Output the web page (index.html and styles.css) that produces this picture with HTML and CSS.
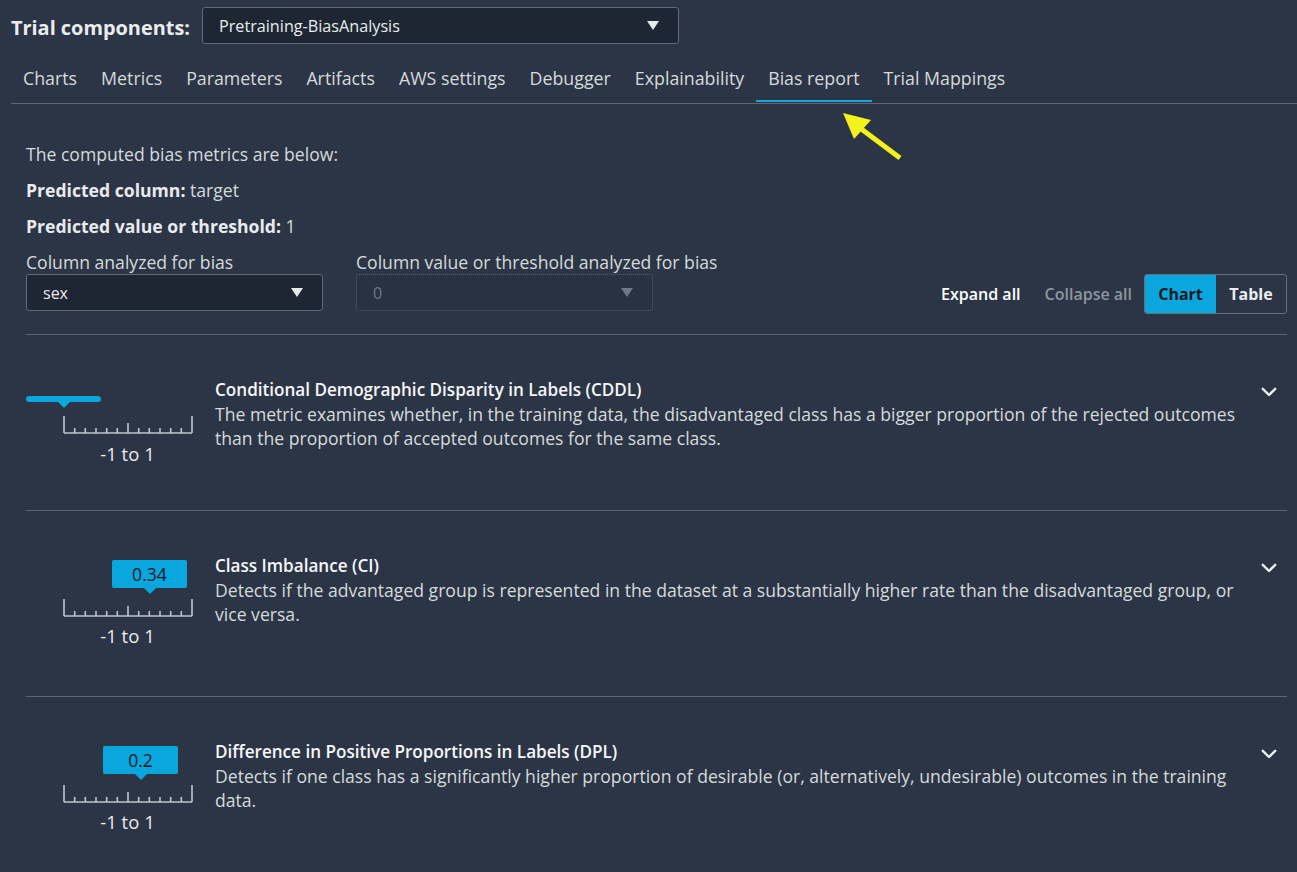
FILE: index.html
```html
<!DOCTYPE html>
<html lang="en">
<head>
<meta charset="utf-8">
<title>Bias report</title>
<link rel="stylesheet" href="styles.css">
</head>
<body>
<div class="app">
  <header class="topbar">
    <span class="topbar__label">Trial components:</span>
    <div class="select select--top">
      <span class="select__value">Pretraining-BiasAnalysis</span>
      <span class="caret"></span>
    </div>
  </header>

  <nav class="tabs">
    <span class="tab">Charts</span>
    <span class="tab">Metrics</span>
    <span class="tab">Parameters</span>
    <span class="tab">Artifacts</span>
    <span class="tab">AWS settings</span>
    <span class="tab">Debugger</span>
    <span class="tab">Explainability</span>
    <span class="tab tab--active">Bias report</span>
    <span class="tab">Trial Mappings</span>
  </nav>

  <main class="report">
    <p class="intro">The computed bias metrics are below:</p>
    <p class="intro"><b>Predicted column:</b> target</p>
    <p class="intro"><b>Predicted value or threshold:</b> 1</p>

    <div class="filters">
      <div class="field">
        <label class="field__label">Column analyzed for bias</label>
        <div class="select select--field">
          <span class="select__value">sex</span>
          <span class="caret"></span>
        </div>
      </div>
      <div class="field field--second">
        <label class="field__label">Column value or threshold analyzed for bias</label>
        <div class="select select--field select--disabled">
          <span class="select__value">0</span>
          <span class="caret caret--disabled"></span>
        </div>
      </div>
      <div class="actions">
        <span class="action action--primary">Expand all</span>
        <span class="action action--muted">Collapse all</span>
        <div class="segmented">
          <span class="segmented__btn segmented__btn--active">Chart</span>
          <span class="segmented__btn">Table</span>
        </div>
      </div>
    </div>

    <section class="metric metric--empty">
      <div class="gauge">
        <div class="gauge__indicator">
          <div class="badge badge--empty" style="margin-left:0px"></div>
        </div>
        <svg class="scale" width="130" height="18" viewBox="0 0 130 18">
          <g stroke="#bfc5cc" stroke-width="1.6" fill="none">
            <line x1="1" y1="17" x2="129" y2="17"/>
            <line x1="1" y1="0" x2="1" y2="17"/>
            <line x1="11.7" y1="12" x2="11.7" y2="17"/>
            <line x1="22.3" y1="12" x2="22.3" y2="17"/>
            <line x1="33" y1="12" x2="33" y2="17"/>
            <line x1="43.7" y1="12" x2="43.7" y2="17"/>
            <line x1="54.3" y1="12" x2="54.3" y2="17"/>
            <line x1="65" y1="7" x2="65" y2="17"/>
            <line x1="75.7" y1="12" x2="75.7" y2="17"/>
            <line x1="86.3" y1="12" x2="86.3" y2="17"/>
            <line x1="97" y1="12" x2="97" y2="17"/>
            <line x1="107.7" y1="12" x2="107.7" y2="17"/>
            <line x1="118.3" y1="12" x2="118.3" y2="17"/>
            <line x1="129" y1="0" x2="129" y2="17"/>
          </g>
        </svg>
        <div class="gauge__range">-1 to 1</div>
      </div>
      <div class="metric__text">
        <div class="metric__title">Conditional Demographic Disparity in Labels (CDDL)</div>
        <div class="metric__desc">The metric examines whether, in the training data, the disadvantaged class has a bigger proportion of the rejected outcomes than the proportion of accepted outcomes for the same class.</div>
      </div>
      <svg class="chevron" width="16" height="10" viewBox="0 0 16 10"><path d="M1.8 1.8 L8 8 L14.2 1.8" fill="none" stroke="#eef0f2" stroke-width="2.4" stroke-linecap="round" stroke-linejoin="round"/></svg>
    </section>

    <section class="metric">
      <div class="gauge">
        <div class="gauge__indicator">
          <div class="badge" style="margin-left:86px">0.34</div>
        </div>
        <svg class="scale" width="130" height="18" viewBox="0 0 130 18">
          <g stroke="#bfc5cc" stroke-width="1.6" fill="none">
            <line x1="1" y1="17" x2="129" y2="17"/>
            <line x1="1" y1="0" x2="1" y2="17"/>
            <line x1="11.7" y1="12" x2="11.7" y2="17"/>
            <line x1="22.3" y1="12" x2="22.3" y2="17"/>
            <line x1="33" y1="12" x2="33" y2="17"/>
            <line x1="43.7" y1="12" x2="43.7" y2="17"/>
            <line x1="54.3" y1="12" x2="54.3" y2="17"/>
            <line x1="65" y1="7" x2="65" y2="17"/>
            <line x1="75.7" y1="12" x2="75.7" y2="17"/>
            <line x1="86.3" y1="12" x2="86.3" y2="17"/>
            <line x1="97" y1="12" x2="97" y2="17"/>
            <line x1="107.7" y1="12" x2="107.7" y2="17"/>
            <line x1="118.3" y1="12" x2="118.3" y2="17"/>
            <line x1="129" y1="0" x2="129" y2="17"/>
          </g>
        </svg>
        <div class="gauge__range">-1 to 1</div>
      </div>
      <div class="metric__text">
        <div class="metric__title">Class Imbalance (CI)</div>
        <div class="metric__desc">Detects if the advantaged group is represented in the dataset at a substantially higher rate than the disadvantaged group, or vice versa.</div>
      </div>
      <svg class="chevron" width="16" height="10" viewBox="0 0 16 10"><path d="M1.8 1.8 L8 8 L14.2 1.8" fill="none" stroke="#eef0f2" stroke-width="2.4" stroke-linecap="round" stroke-linejoin="round"/></svg>
    </section>

    <section class="metric">
      <div class="gauge">
        <div class="gauge__indicator">
          <div class="badge" style="margin-left:77px">0.2</div>
        </div>
        <svg class="scale" width="130" height="18" viewBox="0 0 130 18">
          <g stroke="#bfc5cc" stroke-width="1.6" fill="none">
            <line x1="1" y1="17" x2="129" y2="17"/>
            <line x1="1" y1="0" x2="1" y2="17"/>
            <line x1="11.7" y1="12" x2="11.7" y2="17"/>
            <line x1="22.3" y1="12" x2="22.3" y2="17"/>
            <line x1="33" y1="12" x2="33" y2="17"/>
            <line x1="43.7" y1="12" x2="43.7" y2="17"/>
            <line x1="54.3" y1="12" x2="54.3" y2="17"/>
            <line x1="65" y1="7" x2="65" y2="17"/>
            <line x1="75.7" y1="12" x2="75.7" y2="17"/>
            <line x1="86.3" y1="12" x2="86.3" y2="17"/>
            <line x1="97" y1="12" x2="97" y2="17"/>
            <line x1="107.7" y1="12" x2="107.7" y2="17"/>
            <line x1="118.3" y1="12" x2="118.3" y2="17"/>
            <line x1="129" y1="0" x2="129" y2="17"/>
          </g>
        </svg>
        <div class="gauge__range">-1 to 1</div>
      </div>
      <div class="metric__text">
        <div class="metric__title">Difference in Positive Proportions in Labels (DPL)</div>
        <div class="metric__desc">Detects if one class has a significantly higher proportion of desirable (or, alternatively, undesirable) outcomes in the training data.</div>
      </div>
      <svg class="chevron" width="16" height="10" viewBox="0 0 16 10"><path d="M1.8 1.8 L8 8 L14.2 1.8" fill="none" stroke="#eef0f2" stroke-width="2.4" stroke-linecap="round" stroke-linejoin="round"/></svg>
    </section>
  </main>

  <svg class="callout-arrow" width="80" height="60" viewBox="830 105 80 60">
    <line x1="900" y1="158" x2="860" y2="128" stroke="#f4f21c" stroke-width="5" stroke-linecap="butt"/>
    <polygon points="843,113 871,120 854,139" fill="#f4f21c"/>
  </svg>
</div>
</body>
</html>
```

FILE: styles.css
```css
* { box-sizing: border-box; }

html, body {
  margin: 0;
  padding: 0;
}

body {
  background: #2c3546;
  font-family: "Open Sans", "Noto Sans", sans-serif;
  color: #d5dbdb;
  font-size: 17.6px;
}

.app {
  position: relative;
  width: 1297px;
  height: 872px;
  overflow: hidden;
}

/* Top bar */
.topbar {
  display: flex;
  align-items: center;
  gap: 12px;
  padding: 7px 0 0 11px;
}

.topbar__label {
  padding-top: 3px;
  font-size: 19.9px;
  font-weight: 700;
  color: #eaeded;
}

.select {
  display: flex;
  align-items: center;
  justify-content: space-between;
  height: 37px;
  background: #1e2633;
  border: 1px solid #5f6b7a;
  border-radius: 3px;
  padding: 0 19px 0 16px;
}

.select--top {
  width: 477px;
  font-size: 16.2px;
  color: #eaeded;
}

.caret {
  width: 0;
  height: 0;
  border-left: 6px solid transparent;
  border-right: 6px solid transparent;
  border-top: 9px solid #e6e9ec;
}

.caret--disabled {
  border-top-color: #6f7884;
}

/* Tabs */
.tabs {
  display: flex;
  margin: 10px 0 0 11px;
  height: 50px;
  border-bottom: 1px solid #5f6670;
}

.tab {
  position: relative;
  display: flex;
  align-items: center;
  padding: 0 12px 2px;
  font-size: 17.8px;
  color: #d5dbdb;
}

.tab--active::after {
  content: "";
  position: absolute;
  left: 0;
  right: 0;
  bottom: 1px;
  height: 2px;
  background: #1ba4d8;
}

/* Report */
.report {
  padding: 38px 10px 0 26px;
}

.intro {
  margin: 0 0 12px;
  line-height: 24px;
}

.intro b {
  font-weight: 700;
  color: #e9ebed;
}

.filters {
  display: flex;
  align-items: flex-start;
  padding-bottom: 20px;
  border-bottom: 1px solid #5f6670;
}

.field__label {
  display: block;
  line-height: 24px;
}

.select--field {
  width: 297px;
  font-size: 16px;
  color: #eaeded;
}

.field--second {
  margin-left: 33px;
}

.select--disabled {
  background: #283242;
  border: 1px dotted #59616c;
  color: #6f7884;
}

.actions {
  margin-left: auto;
  margin-top: 24px;
  display: flex;
  align-items: center;
  height: 40px;
  font-size: 16px;
}

.action {
  font-weight: 600;
  margin-right: 24px;
}

.action--primary { color: #ffffff; }
.action--muted { color: #8d959e; margin-right: 12px; }

.segmented {
  display: flex;
  height: 40px;
  border: 1px solid #687078;
  border-radius: 3px;
  overflow: hidden;
}

.segmented__btn {
  display: flex;
  align-items: center;
  justify-content: center;
  width: 71px;
  font-weight: 700;
  color: #eaeded;
}

.segmented__btn + .segmented__btn { width: 70px; }

.segmented__btn--active {
  background: #0aa6de;
  color: #16191f;
}

/* Metrics */
.metric {
  display: flex;
  align-items: flex-start;
  border-bottom: 1px solid #5f6670;
}

.gauge {
  flex: none;
  width: 165px;
  padding: 49px 0 49px;
}

.metric--empty .gauge {
  padding: 61px 0 45px;
}

.gauge__indicator {
  height: 28px;
}

.metric--empty .gauge__indicator {
  height: 6px;
}

.badge {
  position: relative;
  width: 75px;
  height: 28px;
  background: #0aa6de;
  border-radius: 2px;
  color: #16191f;
  text-align: center;
  line-height: 28px;
  font-size: 17.6px;
}

.badge::after {
  content: "";
  position: absolute;
  left: 50%;
  bottom: -6px;
  margin-left: -6px;
  border-left: 6px solid transparent;
  border-right: 6px solid transparent;
  border-top: 6px solid #0aa6de;
}

.badge--empty {
  height: 6px;
  border-radius: 3px;
}

.scale {
  display: block;
  margin: 11px 0 0 37px;
}

.metric--empty .scale {
  margin-top: 14px;
}

.gauge__range {
  width: 129px;
  margin: 8px 0 0 37px;
  text-align: center;
  line-height: 22px;
  font-size: 18.5px;
  color: #e9ebed;
}

.metric--empty .gauge__range {
  margin-top: 9px;
}

.metric__text {
  flex: 1;
  margin-left: 24px;
  padding-top: 43px;
  line-height: 24px;
}

.metric__title {
  font-size: 17.1px;
  font-weight: 600;
  color: #f6f7f8;
}

.metric__desc {
  color: #d5dbdb;
}

.chevron {
  flex: none;
  margin: 52px 10px 0 12px;
}

/* Annotation overlay */
.callout-arrow {
  position: absolute;
  left: 830px;
  top: 105px;
}
```
